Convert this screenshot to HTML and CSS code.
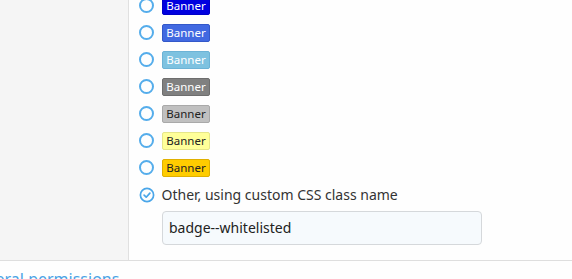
FILE: index.html
```html
<!DOCTYPE html>
<html>
<head>
<meta charset="utf-8">
<link rel="stylesheet" href="styles.css">
</head>
<body>
<div class="section">
  <div class="sidebar"></div>
  <div class="main">
    <div class="options">
      <label class="opt"><span class="radio"></span><span class="banner b1">Banner</span></label>
      <label class="opt"><span class="radio"></span><span class="banner b2">Banner</span></label>
      <label class="opt"><span class="radio"></span><span class="banner b3">Banner</span></label>
      <label class="opt"><span class="radio"></span><span class="banner b4">Banner</span></label>
      <label class="opt"><span class="radio"></span><span class="banner b5">Banner</span></label>
      <label class="opt"><span class="radio"></span><span class="banner b6">Banner</span></label>
      <label class="opt"><span class="radio"></span><span class="banner b7">Banner</span></label>
      <label class="opt"><svg class="check" width="16" height="16" viewBox="0 0 16 16"><circle cx="8" cy="8" r="6.6" fill="none" stroke="#4aa6e9" stroke-width="1.7"/><path d="M5.1 8.2 L7.2 10.2 L10.9 6.1" fill="none" stroke="#4aa6e9" stroke-width="1.7" stroke-linecap="round" stroke-linejoin="round"/></svg><span class="label">Other, using custom CSS class name</span></label>
    </div>
    <div class="input">badge--whitelisted</div>
  </div>
</div>
<div class="next">
  <a class="link">General permissions</a>
</div>
</body>
</html>
```
FILE: styles.css
```css
html, body {
  margin: 0;
  padding: 0;
  background: #fefefe;
  overflow: hidden;
  font-family: "Noto Sans", "Open Sans", sans-serif;
}
.section {
  display: flex;
  border-bottom: 1px solid #dedede;
  height: 261px;
  box-sizing: border-box;
}
.sidebar {
  width: 128px;
  background: #f5f5f5;
  border-right: 1px solid #e0e0e0;
}
.main {
  padding-left: 10px;
  flex: 1;
  display: flex;
  flex-direction: column;
}
.options {
  margin-top: -8px;
  display: flex;
  flex-direction: column;
}
.opt {
  height: 27px;
  display: flex;
  align-items: center;
  gap: 8px;
}
.radio {
  width: 15px;
  height: 15px;
  box-sizing: border-box;
  border: 2px solid #55adeb;
  border-radius: 50%;
}
.check {
  margin-left: -0.5px;
  margin-right: -1px;
}
.banner {
  width: 48px;
  height: 18px;
  box-sizing: border-box;
  border: 1px solid;
  border-radius: 2px;
  font-size: 11.5px;
  line-height: 16px;
  text-align: center;
  color: #fff;
}
.b1 { background: #0000df; border-color: #0000c8; }
.b2 { background: #4169e1; border-color: #3358c9; }
.b3 { background: #7ec2e0; border-color: #6cb3d6; }
.b4 { background: #808080; border-color: #6e6e6e; }
.b5 { background: #c0c0c0; border-color: #a9a9a9; color: #222; }
.b6 { background: #ffff99; border-color: #e6e68a; color: #222; }
.b7 { background: #ffcc00; border-color: #e0b000; color: #222; }
.label {
  font-size: 14px;
  color: #333;
}
.input {
  margin-top: 3px;
  margin-left: 23px;
  width: 320px;
  height: 34px;
  box-sizing: border-box;
  border: 1px solid #d5d8db;
  border-radius: 4px;
  background: #f6fafd;
  padding-left: 6px;
  font-size: 14px;
  line-height: 32px;
  color: #222;
}
.next {
  padding-top: 7px;
}
.link {
  display: block;
  margin-left: -35px;
  font-size: 16px;
  color: #4ba3e5;
}
```
